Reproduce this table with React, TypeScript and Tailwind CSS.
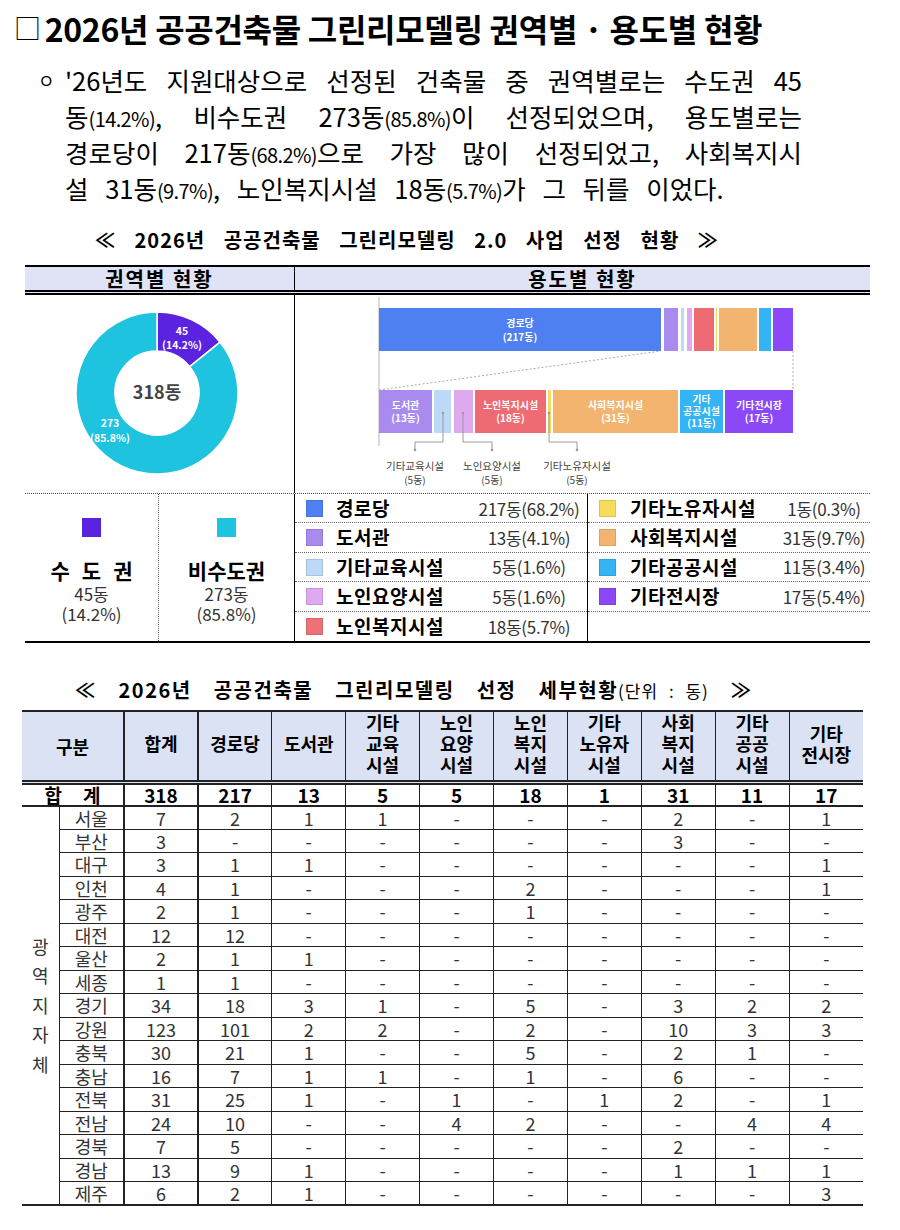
import React from "react";

const rows: string[][] = [
  ["서울", "7", "2", "1", "1", "-", "-", "-", "2", "-", "1"],
  ["부산", "3", "-", "-", "-", "-", "-", "-", "3", "-", "-"],
  ["대구", "3", "1", "1", "-", "-", "-", "-", "-", "-", "1"],
  ["인천", "4", "1", "-", "-", "-", "2", "-", "-", "-", "1"],
  ["광주", "2", "1", "-", "-", "-", "1", "-", "-", "-", "-"],
  ["대전", "12", "12", "-", "-", "-", "-", "-", "-", "-", "-"],
  ["울산", "2", "1", "1", "-", "-", "-", "-", "-", "-", "-"],
  ["세종", "1", "1", "-", "-", "-", "-", "-", "-", "-", "-"],
  ["경기", "34", "18", "3", "1", "-", "5", "-", "3", "2", "2"],
  ["강원", "123", "101", "2", "2", "-", "2", "-", "10", "3", "3"],
  ["충북", "30", "21", "1", "-", "-", "5", "-", "2", "1", "-"],
  ["충남", "16", "7", "1", "1", "-", "1", "-", "6", "-", "-"],
  ["전북", "31", "25", "1", "-", "1", "-", "1", "2", "-", "1"],
  ["전남", "24", "10", "-", "-", "4", "2", "-", "-", "4", "4"],
  ["경북", "7", "5", "-", "-", "-", "-", "-", "2", "-", "-"],
  ["경남", "13", "9", "1", "-", "-", "-", "-", "1", "1", "1"],
  ["제주", "6", "2", "1", "-", "-", "-", "-", "-", "-", "3"],
];

const totals = ["318", "217", "13", "5", "5", "18", "1", "31", "11", "17"];

const headers: string[][] = [
  ["합계"],
  ["경로당"],
  ["도서관"],
  ["기타", "교육", "시설"],
  ["노인", "요양", "시설"],
  ["노인", "복지", "시설"],
  ["기타", "노유자", "시설"],
  ["사회", "복지", "시설"],
  ["기타", "공공", "시설"],
  ["기타", "전시장"],
];

const legendLeft = [
  { name: "경로당", value: "217동(68.2%)", color: "bg-[#4f80f2]" },
  { name: "도서관", value: "13동(4.1%)", color: "bg-[#a98bf0]" },
  { name: "기타교육시설", value: "5동(1.6%)", color: "bg-[#bcd9f7]" },
  { name: "노인요양시설", value: "5동(1.6%)", color: "bg-[#dea9ee]" },
  { name: "노인복지시설", value: "18동(5.7%)", color: "bg-[#ee7178]" },
];

const legendRight = [
  { name: "기타노유자시설", value: "1동(0.3%)", color: "bg-[#f7dc5c]" },
  { name: "사회복지시설", value: "31동(9.7%)", color: "bg-[#f2b46f]" },
  { name: "기타공공시설", value: "11동(3.4%)", color: "bg-[#35b4f3]" },
  { name: "기타전시장", value: "17동(5.4%)", color: "bg-[#8b48f6]" },
];

function Pct({ children }: { children: React.ReactNode }) {
  return <span className="text-[20px] leading-none tracking-[-0.6px]">{children}</span>;
}

function DonutChart() {
  return (
    <svg width={269} height={198} viewBox="25 295 269 198" className="block">
      <path
        d="M157 312 A81 81 0 0 1 220.05 342.16 L189.69 366.64 A42 42 0 0 0 157 351 Z"
        fill="#5b22e0"
        stroke="#ffffff"
        strokeWidth={1.5}
      />
      <path
        d="M220.05 342.16 A81 81 0 1 1 157 312 L157 351 A42 42 0 1 0 189.69 366.64 Z"
        fill="#1ec3e0"
        stroke="#ffffff"
        strokeWidth={1.5}
      />
      <g fill="#ffffff" fontSize={10.5} fontWeight={700} textAnchor="middle">
        <text x={182} y={335}>45</text>
        <text x={182} y={349}>(14.2%)</text>
        <text x={110} y={427}>273</text>
        <text x={110} y={442}>(85.8%)</text>
      </g>
      <text x={157} y={399} fill="#444444" fontSize={18} fontWeight={700} textAnchor="middle">
        318동
      </text>
    </svg>
  );
}

function UsageChart() {
  const top: [number, number, string][] = [
    [379, 661, "#4f80f2"],
    [664, 678, "#a98bf0"],
    [681, 684, "#bcd9f7"],
    [687, 692, "#dea9ee"],
    [694, 714, "#ee6b73"],
    [716, 717, "#f7dc5c"],
    [719, 757, "#f2b46f"],
    [759, 771, "#35b4f3"],
    [773, 793, "#8b48f6"],
  ];
  const bottom: [number, number, string][] = [
    [379, 432, "#a98bf0"],
    [434, 451, "#bcd9f7"],
    [454, 473, "#dea9ee"],
    [475, 546, "#ee6b73"],
    [548, 551, "#f7dc5c"],
    [553, 678, "#f2b46f"],
    [680, 723, "#35b4f3"],
    [725, 793, "#8b48f6"],
  ];
  const callouts = [
    { from: 443, to: 415, name: "기타교육시설" },
    { from: 463, to: 492, name: "노인요양시설" },
    { from: 549, to: 577, name: "기타노유자시설" },
  ];
  return (
    <svg width={575} height={198} viewBox="295 295 575 198" className="block">
      <line x1={379} y1={297} x2={379} y2={446} stroke="#b5b5b5" strokeWidth={1} />
      {top.map(([a, b, c]) => (
        <rect key={`t${a}`} x={a} y={308} width={b - a} height={43} fill={c} />
      ))}
      {bottom.map(([a, b, c]) => (
        <rect key={`b${a}`} x={a} y={390} width={b - a} height={43} fill={c} />
      ))}
      <line x1={379} y1={390} x2={661} y2={351} stroke="#aaaaaa" strokeWidth={1} strokeDasharray="2 2" />
      <line x1={793} y1={351} x2={793} y2={390} stroke="#aaaaaa" strokeWidth={1} strokeDasharray="2 2" />
      <g fill="#ffffff" fontSize={10} fontWeight={700} textAnchor="middle">
        <text x={520} y={327}>경로당</text>
        <text x={520} y={341}>(217동)</text>
        <text x={405.5} y={409}>도서관</text>
        <text x={405.5} y={422}>(13동)</text>
        <text x={510.5} y={409}>노인복지시설</text>
        <text x={510.5} y={422}>(18동)</text>
        <text x={615.5} y={409}>사회복지시설</text>
        <text x={615.5} y={422}>(31동)</text>
        <text x={701.5} y={403}>기타</text>
        <text x={701.5} y={415}>공공시설</text>
        <text x={701.5} y={427}>(11동)</text>
        <text x={759} y={409}>기타전시장</text>
        <text x={759} y={422}>(17동)</text>
      </g>
      {callouts.map((c) => (
        <g key={c.name}>
          <path d={`M${c.from} 413 V442 H${c.to} V450`} fill="none" stroke="#9a9a9a" strokeWidth={1} />
          <circle cx={c.from} cy={413} r={1.3} fill="#9a9a9a" />
          <circle cx={c.to} cy={450} r={1.3} fill="#9a9a9a" />
          <text x={c.to} y={470} fill="#444444" fontSize={10.5} textAnchor="middle">
            {c.name}
          </text>
          <text x={c.to} y={484} fill="#444444" fontSize={10} textAnchor="middle">
            (5동)
          </text>
        </g>
      ))}
    </svg>
  );
}

function LegendColumn({
  items,
  cols,
  pad,
}: {
  items: { name: string; value: string; color: string }[];
  cols: string;
  pad: string;
}) {
  return (
    <div className="flex flex-col">
      {Array.from({ length: 5 }).map((_, i) => {
        const item = items[i];
        return (
          <div
            key={i}
            className={`h-[29.4px] ${i < 4 ? "border-b border-dotted border-[#666]" : ""}`}
          >
            {item && (
              <div className={`grid h-full items-center ${cols} ${pad}`}>
                <span className={`ml-[11px] h-[17px] w-[17px] border border-black/10 ${item.color}`} />
                <span className="text-[19px] font-bold tracking-[0.5px]">{item.name}</span>
                <span className="text-center text-[17px] tracking-[-0.3px] text-[#333]">{item.value}</span>
              </div>
            )}
          </div>
        );
      })}
    </div>
  );
}

function Region({ name, count, pct, color }: { name: React.ReactNode; count: string; pct: string; color: string }) {
  return (
    <div className="flex flex-col items-center pt-[24px]">
      <span className={`h-[19px] w-[19px] ${color}`} />
      <div className="mt-[20px] text-[21px] font-bold leading-[27px]">{name}</div>
      <div className="text-[17px] leading-[20px] text-[#333]">{count}</div>
      <div className="text-[17px] leading-[20px] text-[#333]">{pct}</div>
    </div>
  );
}

export default function App() {
  return (
    <div className="min-h-[1230px] w-[900px] bg-white font-['Noto_Sans_CJK_KR','Noto_Sans',sans-serif] text-black">
      {/* title */}
      <div className="flex h-[48px] pl-[14px] pt-[10px] text-[32px] font-bold leading-[36px] tracking-[-0.3px]">
        <span className="mr-[4px] text-[27px] font-normal">□</span>
        <span>2026년 공공건축물 그린리모델링 권역별 · 용도별 현황</span>
      </div>

      {/* summary paragraph */}
      <div className="mt-[14px] flex pl-[38px]">
        <span className="w-[27px] text-[18px] leading-[36px]">ㅇ</span>
        <div className="w-[737px] text-[25.5px] leading-[36px]">
          <div className="text-justify [text-align-last:justify]">
            '26년도 지원대상으로 선정된 건축물 중 권역별로는 수도권 45
          </div>
          <div className="text-justify [text-align-last:justify]">
            동<Pct>(14.2%)</Pct>, 비수도권 273동<Pct>(85.8%)</Pct>이 선정되었으며, 용도별로는
          </div>
          <div className="text-justify [text-align-last:justify]">
            경로당이 217동<Pct>(68.2%)</Pct>으로 가장 많이 선정되었고, 사회복지시
          </div>
          <div className="[word-spacing:11px]">
            설 31동<Pct>(9.7%)</Pct>, 노인복지시설 18동<Pct>(5.7%)</Pct>가 그 뒤를 이었다.
          </div>
        </div>
      </div>

      {/* chart subtitle */}
      <div className="mt-[20px] pl-[95px] text-[20px] font-bold leading-[28px] tracking-[1px] [word-spacing:13px]">
        ≪ 2026년 공공건축물 그린리모델링 2.0 사업 선정 현황 ≫
      </div>

      {/* overview box */}
      <section className="ml-[25px] mt-[11px] w-[845px] border-y-2 border-black">
        <div className="grid h-[28px] grid-cols-[270px_575px] border-b-[5px] border-double border-black bg-[#dfe3f5] text-[20px] font-bold leading-[23px] tracking-[2px]">
          <div className="border-r border-black text-center">권역별 현황</div>
          <div className="text-center">용도별 현황</div>
        </div>
        <div className="grid h-[199px] grid-cols-[270px_575px] border-b border-dotted border-[#555]">
          <div className="border-r border-black">
            <DonutChart />
          </div>
          <div>
            <UsageChart />
          </div>
        </div>
        <div className="grid h-[147px] grid-cols-[270px_575px]">
          <div className="grid grid-cols-[134px_135px] border-r border-black">
            <div className="border-r border-dotted border-[#666]">
              <Region
                name={
                  <span className="inline-flex w-[82px] justify-between">
                    <span>수</span>
                    <span>도</span>
                    <span>권</span>
                  </span>
                }
                count="45동"
                pct="(14.2%)"
                color="bg-[#5b22e0]"
              />
            </div>
            <Region name="비수도권" count="273동" pct="(85.8%)" color="bg-[#1ec3e0]" />
          </div>
          <div className="grid grid-cols-[293px_282px]">
            <div className="border-r border-black">
              <LegendColumn items={legendLeft} cols="grid-cols-[41px_1fr_110px]" pad="pr-[3px]" />
            </div>
            <LegendColumn items={legendRight} cols="grid-cols-[42px_1fr_92px]" pad="pr-0" />
          </div>
        </div>
      </section>

      {/* detail subtitle */}
      <div className="mt-[33px] pl-[75px] text-[20px] font-bold leading-[28px] tracking-[1.5px] [word-spacing:16px]">
        ≪ 2026년 공공건축물 그린리모델링 선정 세부현황
        <span className="text-[17px] font-normal tracking-[1px] [word-spacing:6px]">(단위 : 동)</span> ≫
      </div>

      {/* detail table */}
      <table className="ml-[22px] mt-[5px] w-[841px] table-fixed border-collapse text-center">
        <colgroup>
          <col className="w-[37px]" />
          <col className="w-[65px]" />
          {headers.map((_, i) => (
            <col key={i} className="w-[73.9px]" />
          ))}
        </colgroup>
        <thead>
          <tr className="h-[70px] bg-[#dbe2f4] text-[18px] font-bold leading-[21px]">
            <th
              colSpan={2}
              className="border-t-2 border-r-2 border-b-[5px] border-[#222] [border-bottom-style:double]"
            >
              구분
            </th>
            {headers.map((h, i) => (
              <th
                key={i}
                className={`border-t-2 border-b-[5px] border-[#222] pb-[5px] [border-bottom-style:double] ${
                  i === 0 ? "border-r-2" : i < headers.length - 1 ? "border-r" : ""
                }`}
              >
                {h.map((line) => (
                  <div key={line}>{line}</div>
                ))}
              </th>
            ))}
          </tr>
        </thead>
        <tbody>
          <tr className="h-[23px] text-[19px] font-bold leading-none">
            <td colSpan={2} className="border-r-2 border-b-2 border-[#222]">
              <span className="inline-flex w-[56px] justify-between">
                <span>합</span>
                <span>계</span>
              </span>
            </td>
            {totals.map((t, i) => (
              <td
                key={i}
                className={`border-b-2 border-[#222] ${
                  i === 0 ? "border-r-2" : i < totals.length - 1 ? "border-r" : ""
                }`}
              >
                {t}
              </td>
            ))}
          </tr>
          {rows.map((r, ri) => {
            const last = ri === rows.length - 1;
            return (
              <tr key={r[0]} className="h-[23.5px] text-[18px] leading-none text-[#333]">
                {ri === 0 && (
                  <td
                    rowSpan={rows.length}
                    className="border-r border-b-2 border-[#222] align-middle text-[18px] leading-[29.5px]"
                  >
                    {["광", "역", "지", "자", "체"].map((c) => (
                      <div key={c}>{c}</div>
                    ))}
                  </td>
                )}
                {r.map((v, ci) => (
                  <td
                    key={ci}
                    className={`border-[#222] ${last ? "border-b-2" : "border-b"} ${
                      ci <= 1 ? "border-r-2" : ci < r.length - 1 ? "border-r" : ""
                    }`}
                  >
                    {v}
                  </td>
                ))}
              </tr>
            );
          })}
        </tbody>
      </table>
    </div>
  );
}
